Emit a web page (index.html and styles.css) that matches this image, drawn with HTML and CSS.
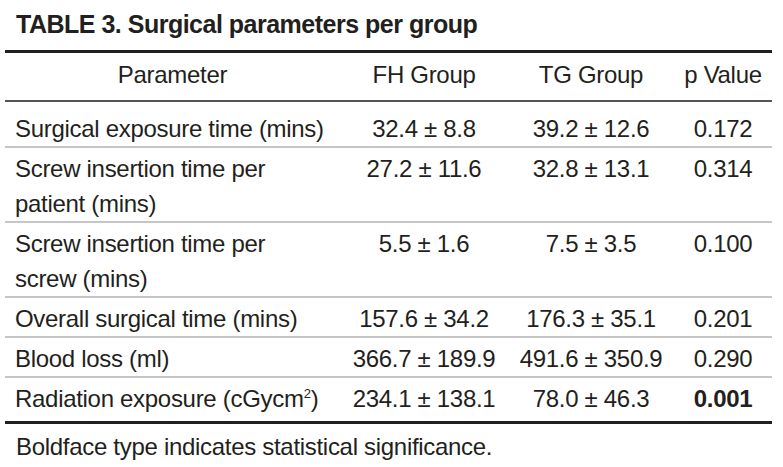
FILE: index.html
```html
<!DOCTYPE html>
<html lang="en">
<head>
<meta charset="utf-8">
<title>Table 3</title>
<link rel="stylesheet" href="styles.css">
</head>
<body>
<div class="page">
  <h1 class="title">TABLE 3. Surgical parameters per group</h1>
  <table class="data">
    <colgroup>
      <col class="c1"><col class="c2"><col class="c3"><col class="c4">
    </colgroup>
    <thead>
      <tr>
        <th>Parameter</th>
        <th>FH Group</th>
        <th>TG Group</th>
        <th>p Value</th>
      </tr>
    </thead>
    <tbody>
      <tr class="first">
        <td class="label">Surgical exposure time (mins)</td>
        <td>32.4 ± 8.8</td>
        <td>39.2 ± 12.6</td>
        <td>0.172</td>
      </tr>
      <tr>
        <td class="label">Screw insertion time per<br>patient (mins)</td>
        <td>27.2 ± 11.6</td>
        <td>32.8 ± 13.1</td>
        <td>0.314</td>
      </tr>
      <tr>
        <td class="label">Screw insertion time per<br>screw (mins)</td>
        <td>5.5 ± 1.6</td>
        <td>7.5 ± 3.5</td>
        <td>0.100</td>
      </tr>
      <tr>
        <td class="label">Overall surgical time (mins)</td>
        <td>157.6 ± 34.2</td>
        <td>176.3 ± 35.1</td>
        <td>0.201</td>
      </tr>
      <tr>
        <td class="label">Blood loss (ml)</td>
        <td>366.7 ± 189.9</td>
        <td>491.6 ± 350.9</td>
        <td>0.290</td>
      </tr>
      <tr class="last">
        <td class="label">Radiation exposure (cGycm<sup class="sup">2</sup>)</td>
        <td>234.1 ± 138.1</td>
        <td>78.0 ± 46.3</td>
        <td><strong class="sig">0.001</strong></td>
      </tr>
    </tbody>
  </table>
  <p class="note">Boldface type indicates statistical significance.</p>
</div>
</body>
</html>
```

FILE: styles.css
```css
html, body {
  margin: 0;
  padding: 0;
  background: #ffffff;
}

body {
  font-family: "Liberation Sans", Arial, sans-serif;
  color: #231f20;
}

.page {
  padding: 9px 0 0 5px;
}

.title {
  margin: 0 0 11px 0;
  padding-left: 11px;
  font-size: 25px;
  line-height: 30px;
  font-weight: bold;
  letter-spacing: -0.5px;
}

.data {
  width: 767px;
  border-collapse: collapse;
  table-layout: fixed;
  font-size: 24px;
  line-height: 35px;
  letter-spacing: -0.3px;
}

.c1 { width: 335px; }
.c2 { width: 168px; }
.c3 { width: 166px; }
.c4 { width: 98px; }

.data thead tr {
  border-top: 3px solid #231f20;
  border-bottom: 2px solid #555555;
}

.data th {
  font-weight: normal;
  text-align: center;
  vertical-align: top;
  padding: 4px 0 8px 0;
  white-space: nowrap;
}

.data td {
  text-align: center;
  vertical-align: top;
  padding: 3px 0 0 0;
  white-space: nowrap;
}

.data td.label {
  text-align: left;
  padding-left: 10px;
}

.data tbody tr {
  border-bottom: 2px solid #c6c6c6;
}

.data tbody tr.first td {
  padding-top: 9px;
}

.data tbody tr.last {
  border-bottom: 3px solid #231f20;
}

.data tbody tr.last td {
  padding-bottom: 5px;
}

.sup {
  font-size: 13px;
  line-height: 0;
  vertical-align: 9px;
  letter-spacing: 0;
}

.sig {
  font-weight: bold;
}

.note {
  margin: 5px 0 0 0;
  padding-left: 11px;
  font-size: 24px;
  line-height: 35px;
  letter-spacing: -0.3px;
}
```
